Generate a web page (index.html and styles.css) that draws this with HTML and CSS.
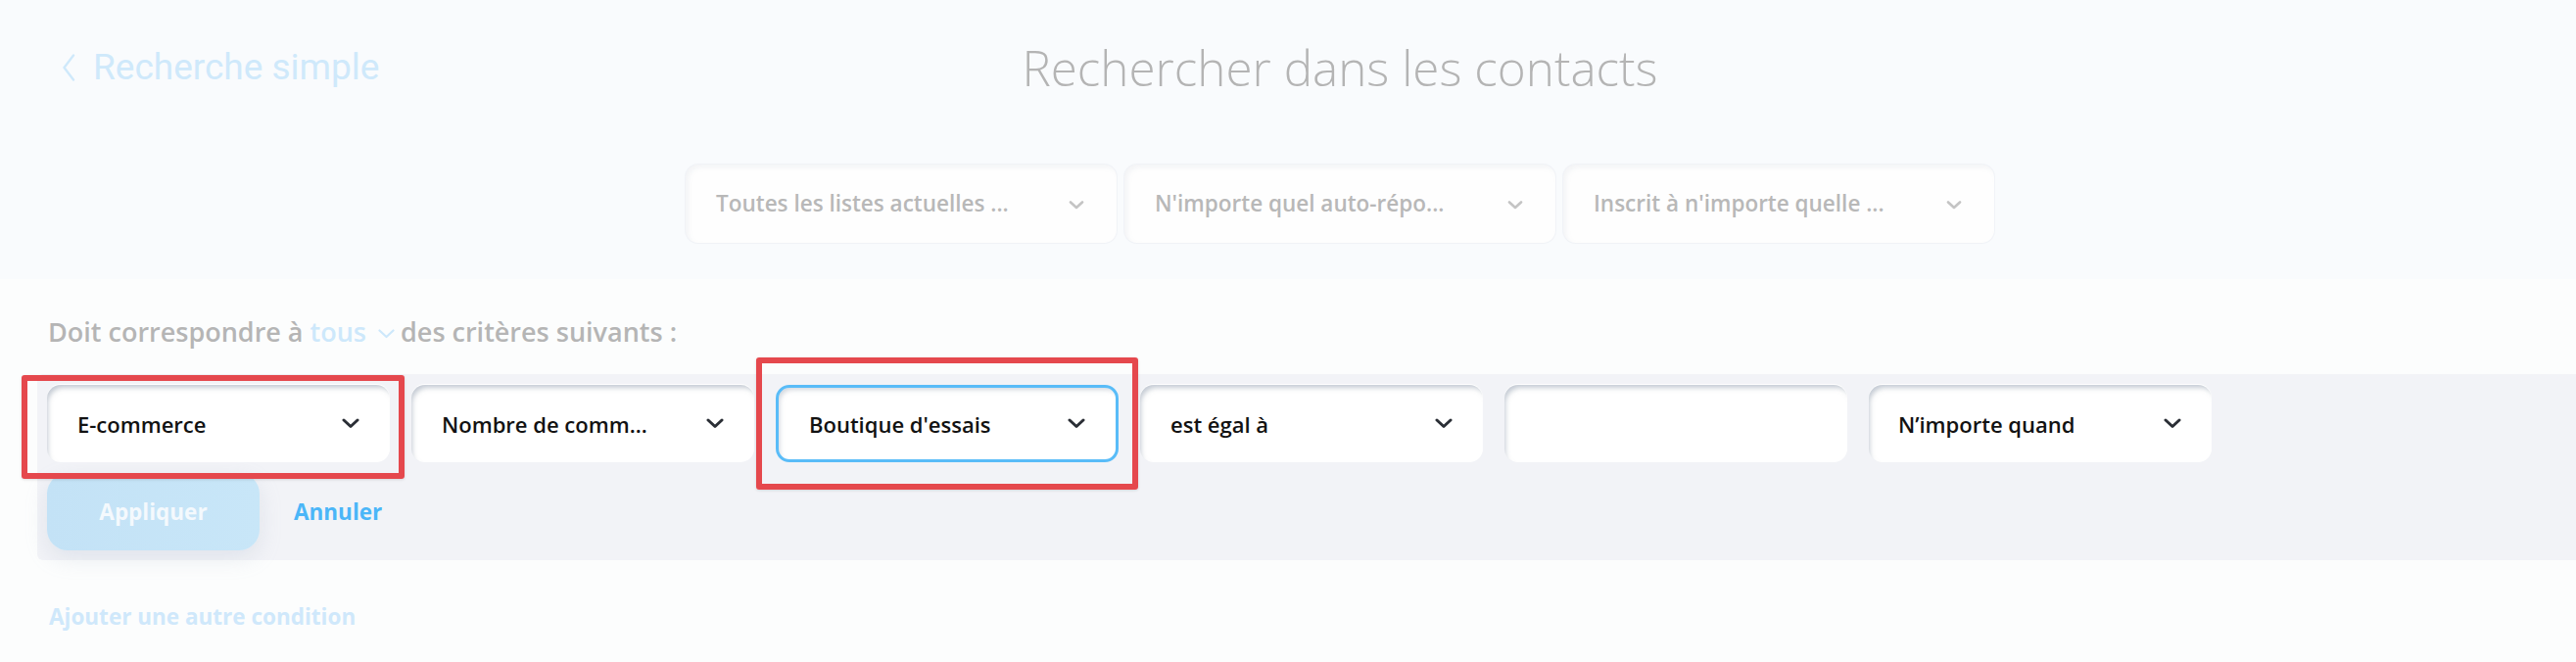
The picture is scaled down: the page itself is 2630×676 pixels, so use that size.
FILE: index.html
```html
<!DOCTYPE html>
<html lang="fr">
<head>
<meta charset="utf-8">
<title>Rechercher dans les contacts</title>
<link rel="stylesheet" href="styles.css">
</head>
<body>
<header class="top">
  <div class="titlebar">
    <a class="back" href="#">
      <svg class="back-ico" width="14" height="28" viewBox="0 0 14 28"><path d="M12 1.5 L2.5 14 L12 26.5" fill="none" stroke="currentColor" stroke-width="2.4" stroke-linecap="round" stroke-linejoin="round"/></svg>
      <span>Recherche simple</span>
    </a>
    <h1 class="title">Rechercher dans les contacts</h1>
    <span class="spacer"></span>
  </div>
  <div class="filters">
    <div class="fbox"><span class="ftext">Toutes les listes actuelles ...</span><svg class="fchev" width="16" height="9" viewBox="0 0 16 9"><path d="M2 1.5 L8 7 L14 1.5" fill="none" stroke="currentColor" stroke-width="2.6" stroke-linecap="round" stroke-linejoin="round"/></svg></div>
    <div class="fbox"><span class="ftext">N'importe quel auto-répo...</span><svg class="fchev" width="16" height="9" viewBox="0 0 16 9"><path d="M2 1.5 L8 7 L14 1.5" fill="none" stroke="currentColor" stroke-width="2.6" stroke-linecap="round" stroke-linejoin="round"/></svg></div>
    <div class="fbox"><span class="ftext">Inscrit à n'importe quelle ...</span><svg class="fchev" width="16" height="9" viewBox="0 0 16 9"><path d="M2 1.5 L8 7 L14 1.5" fill="none" stroke="currentColor" stroke-width="2.6" stroke-linecap="round" stroke-linejoin="round"/></svg></div>
  </div>
</header>

<main class="criteria">
  <p class="match">Doit correspondre à <span class="tous">tous<svg class="tous-chev" width="17" height="10" viewBox="0 0 17 10"><path d="M1.5 1.5 L8.5 8 L15.5 1.5" fill="none" stroke="currentColor" stroke-width="2.2" stroke-linecap="round" stroke-linejoin="round"/></svg></span>des critères suivants :</p>

  <section class="panel">
    <div class="conds">
      <div class="field">
        <span class="ftxt">E-commerce</span>
        <svg class="chev" width="18" height="11" viewBox="0 0 18 11"><path d="M2 2 L9 8.5 L16 2" fill="none" stroke="currentColor" stroke-width="3" stroke-linecap="round" stroke-linejoin="round"/></svg>
        <span class="mark mark-a"></span>
      </div>
      <div class="field">
        <span class="ftxt">Nombre de comm...</span>
        <svg class="chev" width="18" height="11" viewBox="0 0 18 11"><path d="M2 2 L9 8.5 L16 2" fill="none" stroke="currentColor" stroke-width="3" stroke-linecap="round" stroke-linejoin="round"/></svg>
      </div>
      <div class="field field-active">
        <span class="ftxt">Boutique d'essais</span>
        <svg class="chev" width="18" height="11" viewBox="0 0 18 11"><path d="M2 2 L9 8.5 L16 2" fill="none" stroke="currentColor" stroke-width="3" stroke-linecap="round" stroke-linejoin="round"/></svg>
        <span class="mark mark-b"></span>
      </div>
      <div class="field">
        <span class="ftxt">est égal à</span>
        <svg class="chev" width="18" height="11" viewBox="0 0 18 11"><path d="M2 2 L9 8.5 L16 2" fill="none" stroke="currentColor" stroke-width="3" stroke-linecap="round" stroke-linejoin="round"/></svg>
      </div>
      <div class="field field-input"></div>
      <div class="field field-last">
        <span class="ftxt">N’importe quand</span>
        <svg class="chev" width="18" height="11" viewBox="0 0 18 11"><path d="M2 2 L9 8.5 L16 2" fill="none" stroke="currentColor" stroke-width="3" stroke-linecap="round" stroke-linejoin="round"/></svg>
      </div>
    </div>
    <div class="actions">
      <button class="apply" type="button">Appliquer</button>
      <a class="cancel" href="#">Annuler</a>
    </div>
  </section>

  <a class="add" href="#">Ajouter une autre condition</a>
</main>
</body>
</html>
```
FILE: styles.css
```css
html, body {
  margin: 0;
  padding: 0;
}
body {
  background: #fcfdfd;
  font-family: "Open Sans", "Noto Sans", sans-serif;
  width: 2630px;
  height: 676px;
  overflow: hidden;
}

/* ---------- top (dimmed) section ---------- */
.top {
  background: #f9fbfd;
  padding: 34px 0 37px 106px;
  height: 285px;
  box-sizing: border-box;
}
.titlebar {
  display: grid;
  grid-template-columns: 1fr auto 1fr;
  align-items: center;
  height: 70px;
}
.back {
  justify-self: start;
  margin-left: -43px;
  display: flex;
  align-items: center;
  gap: 18px;
  font-family: Roboto, "Open Sans", sans-serif;
  font-weight: 400;
  font-size: 37px;
  line-height: 70px;
  color: #cfe9fb;
  text-decoration: none;
}
.back-ico {
  display: block;
  margin-top: -1px;
}
.title {
  margin: 0;
  font-family: "Open Sans", sans-serif;
  font-weight: 300;
  font-size: 49.4px;
  line-height: 70px;
  color: #b4b4b4;
}

.filters {
  display: flex;
  justify-content: center;
  gap: 8px;
  margin-top: 64px;
}
.fbox {
  width: 440px;
  height: 80px;
  box-sizing: border-box;
  background: #fefefe;
  border-radius: 13px;
  box-shadow: inset 3px 3px 5px rgba(150, 160, 175, 0.10), 0 0 0 1px rgba(235, 238, 243, 0.6);
  display: flex;
  align-items: center;
  justify-content: space-between;
  padding: 0 33px 0 31px;
}
.ftext {
  font-weight: 600;
  font-size: 22.5px;
  line-height: 30px;
  color: #b8b8b8;
  white-space: nowrap;
}
.fchev {
  display: block;
  margin-top: 2px;
  color: #c4c4c4;
}

/* ---------- criteria ---------- */
.criteria {
  padding-top: 34px;
}
.match {
  margin: 0 0 0 49px;
  font-weight: 600;
  font-size: 27px;
  line-height: 40px;
  color: #b5b5b5;
  white-space: nowrap;
}
.tous {
  color: #cde8fb;
  display: inline-flex;
  align-items: center;
  gap: 12px;
  margin-right: 6px;
}
.tous-chev {
  display: block;
  margin-top: 4px;
}

.panel {
  margin-top: 23px;
  margin-left: 38px;
  background: #f2f3f7;
  border-radius: 6px 0 0 6px;
  padding: 11px 0 10px 10px;
}
.conds {
  display: flex;
  gap: 22px;
}
.field {
  position: relative;
  width: 350px;
  height: 79px;
  box-sizing: border-box;
  flex: none;
  background: #ffffff;
  border-radius: 14px;
  box-shadow: inset 3px 5px 5px -2px rgba(140, 152, 170, 0.5), 0 -1px 0 0 #ffffff;
  display: flex;
  align-items: center;
  justify-content: space-between;
  padding: 0 32px 0 31px;
}
.field-active {
  border: 3px solid #59bcf8;
  box-shadow: inset 3px 4px 5px -2px rgba(140, 152, 170, 0.4);
}
.field-last {
  padding-left: 30px;
}
.ftxt {
  font-weight: 600;
  font-size: 22px;
  line-height: 30px;
  color: #121212;
  white-space: nowrap;
}
.chev {
  display: block;
  color: #2a2e35;
  margin-right: -1px;
}

.mark {
  position: absolute;
  border: 6px solid #e5484d;
  border-radius: 3px;
  box-shadow: 0 1px 3px rgba(0, 0, 0, 0.12);
  pointer-events: none;
  z-index: 2;
}
.mark-a {
  left: -26px;
  right: -15px;
  top: -10px;
  bottom: -17px;
}
.mark-b {
  left: -23px;
  right: -23px;
  top: -31px;
  bottom: -31px;
}

.actions {
  display: flex;
  align-items: center;
  gap: 35px;
  margin-top: 11px;
}
.apply {
  width: 217px;
  height: 79px;
  border: none;
  border-radius: 21px;
  background: linear-gradient(90deg, #c3e2f6, #c8e6f8);
  box-shadow: 0 8px 22px rgba(160, 175, 195, 0.22);
  font-family: "Open Sans", sans-serif;
  font-weight: 700;
  font-size: 22.5px;
  color: #f4f9fd;
  padding: 0;
}
.cancel {
  font-weight: 700;
  font-size: 22.5px;
  color: #4bb6f8;
  text-decoration: none;
}

.add {
  display: block;
  margin: 43px 0 0 50px;
  font-weight: 700;
  font-size: 22.5px;
  line-height: 30px;
  color: #cfe8fb;
  text-decoration: none;
  width: max-content;
}
```
